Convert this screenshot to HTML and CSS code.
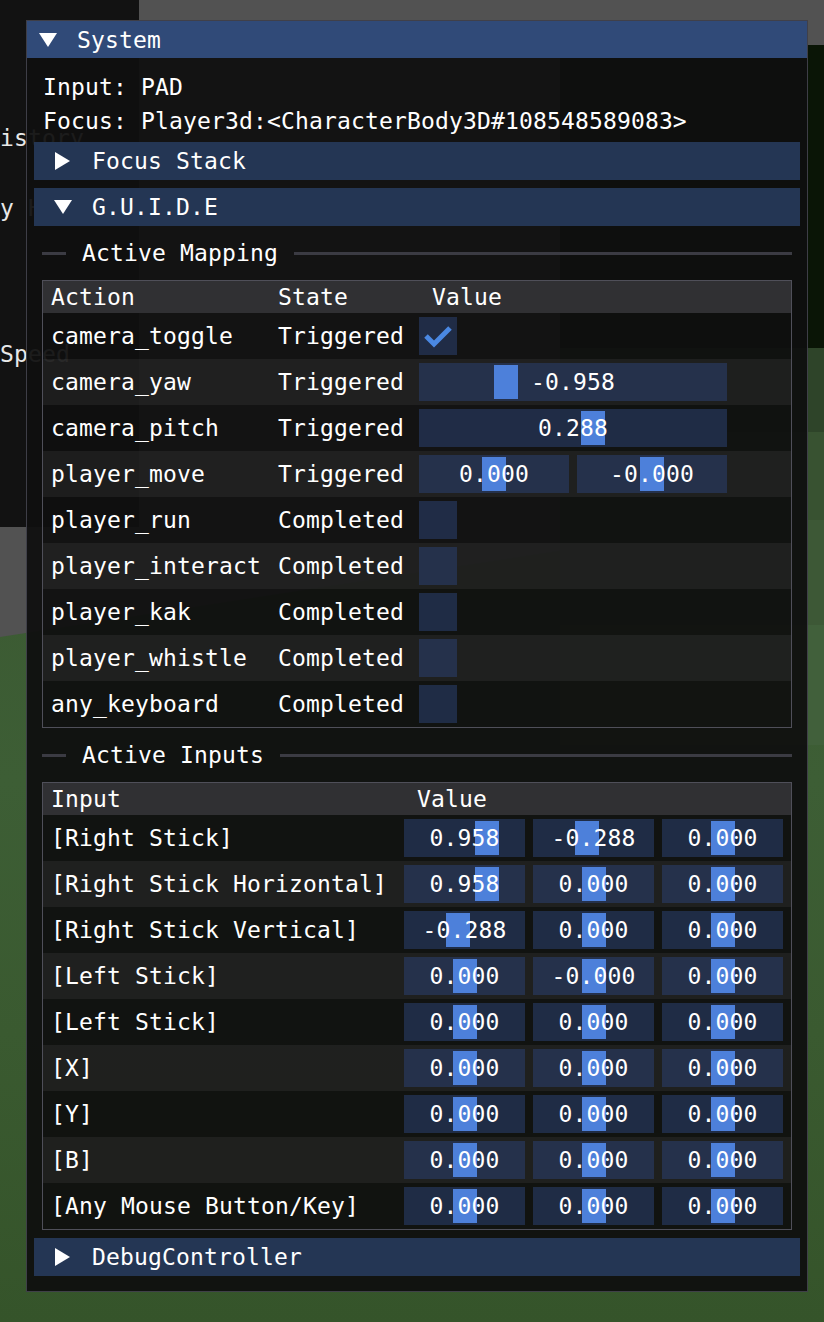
FILE: index.html
```html
<!DOCTYPE html>
<html>
<head>
<meta charset="utf-8">
<link rel="stylesheet" href="styles.css">
</head>
<body>
<div class="scene">
  <div class="ground"></div>
  <div class="sky"></div>
  <div class="trees"></div>
  <div class="band b1"></div>
  <div class="band b2"></div>
  <div class="band b3"></div>
  <div class="band b4"></div>
  <div class="left-panel">
    <div class="bgtext t1">istory</div>
    <div class="bgtext t2">y History</div>
    <div class="bgtext t3">Speed</div>
  </div>
</div>

<div class="window">
  <div class="titlebar">
    <svg class="arrow-down" width="18" height="14" viewBox="0 0 18 14"><polygon points="0,0 18,0 9,14" fill="#fff"/></svg>
    <span class="title">System</span>
  </div>
  <div class="content">
    <div class="text-line">Input: PAD</div>
    <div class="text-line">Focus: Player3d:&lt;CharacterBody3D#108548589083&gt;</div>

    <div class="header">
      <svg class="arrow" width="18" height="18" viewBox="0 0 18 18"><polygon points="1,0 16,9 1,18" fill="#fff"/></svg>
      <span class="label">Focus Stack</span>
    </div>
    <div class="header">
      <svg class="arrow" width="18" height="18" viewBox="0 0 18 18"><polygon points="0,2 18,2 9,16" fill="#fff"/></svg>
      <span class="label">G.U.I.D.E</span>
    </div>

    <div class="sep">
      <span class="sep-line short"></span>
      <span class="sep-label">Active Mapping</span>
      <span class="sep-line grow"></span>
    </div>

    <div class="table map">
      <div class="thead">
        <div class="cell">Action</div>
        <div class="cell">State</div>
        <div class="cell hval">Value</div>
      </div>
      <div class="tbody">
        <div class="trow">
          <div class="cell">camera_toggle</div>
          <div class="cell">Triggered</div>
          <div class="cell"><div class="box"><svg width="38" height="38" viewBox="0 0 38 38"><polyline points="7,19 15,27 31,11" fill="none" stroke="#4a88e2" stroke-width="5"/></svg></div></div>
        </div>
        <div class="trow">
          <div class="cell">camera_yaw</div>
          <div class="cell">Triggered</div>
          <div class="cell"><div class="slider w308"><div class="grab" style="--p:0.2605"></div><div class="val">-0.958</div></div></div>
        </div>
        <div class="trow">
          <div class="cell">camera_pitch</div>
          <div class="cell">Triggered</div>
          <div class="cell"><div class="slider w308"><div class="grab" style="--p:0.572"></div><div class="val">0.288</div></div></div>
        </div>
        <div class="trow">
          <div class="cell">player_move</div>
          <div class="cell">Triggered</div>
          <div class="cell"><div class="pair">
            <div class="slider w150"><div class="grab" style="--p:0.5"></div><div class="val">0.000</div></div>
            <div class="slider w150"><div class="grab" style="--p:0.5"></div><div class="val">-0.000</div></div>
          </div></div>
        </div>
        <div class="trow">
          <div class="cell">player_run</div>
          <div class="cell">Completed</div>
          <div class="cell"><div class="box"></div></div>
        </div>
        <div class="trow">
          <div class="cell">player_interact</div>
          <div class="cell">Completed</div>
          <div class="cell"><div class="box"></div></div>
        </div>
        <div class="trow">
          <div class="cell">player_kak</div>
          <div class="cell">Completed</div>
          <div class="cell"><div class="box"></div></div>
        </div>
        <div class="trow">
          <div class="cell">player_whistle</div>
          <div class="cell">Completed</div>
          <div class="cell"><div class="box"></div></div>
        </div>
        <div class="trow">
          <div class="cell">any_keyboard</div>
          <div class="cell">Completed</div>
          <div class="cell"><div class="box"></div></div>
        </div>
      </div>
    </div>

    <div class="sep">
      <span class="sep-line short"></span>
      <span class="sep-label">Active Inputs</span>
      <span class="sep-line grow"></span>
    </div>

    <div class="table inputs">
      <div class="thead">
        <div class="cell">Input</div>
        <div class="cell hval">Value</div>
      </div>
      <div class="tbody">
        <div class="trow">
          <div class="cell">[Right Stick]</div>
          <div class="cell"><div class="triple">
            <div class="slider"><div class="grab" style="--p:0.7395"></div><div class="val">0.958</div></div>
            <div class="slider"><div class="grab" style="--p:0.428"></div><div class="val">-0.288</div></div>
            <div class="slider"><div class="grab" style="--p:0.5"></div><div class="val">0.000</div></div>
          </div></div>
        </div>
        <div class="trow">
          <div class="cell">[Right Stick Horizontal]</div>
          <div class="cell"><div class="triple">
            <div class="slider"><div class="grab" style="--p:0.7395"></div><div class="val">0.958</div></div>
            <div class="slider"><div class="grab" style="--p:0.5"></div><div class="val">0.000</div></div>
            <div class="slider"><div class="grab" style="--p:0.5"></div><div class="val">0.000</div></div>
          </div></div>
        </div>
        <div class="trow">
          <div class="cell">[Right Stick Vertical]</div>
          <div class="cell"><div class="triple">
            <div class="slider"><div class="grab" style="--p:0.428"></div><div class="val">-0.288</div></div>
            <div class="slider"><div class="grab" style="--p:0.5"></div><div class="val">0.000</div></div>
            <div class="slider"><div class="grab" style="--p:0.5"></div><div class="val">0.000</div></div>
          </div></div>
        </div>
        <div class="trow">
          <div class="cell">[Left Stick]</div>
          <div class="cell"><div class="triple">
            <div class="slider"><div class="grab" style="--p:0.5"></div><div class="val">0.000</div></div>
            <div class="slider"><div class="grab" style="--p:0.5"></div><div class="val">-0.000</div></div>
            <div class="slider"><div class="grab" style="--p:0.5"></div><div class="val">0.000</div></div>
          </div></div>
        </div>
        <div class="trow">
          <div class="cell">[Left Stick]</div>
          <div class="cell"><div class="triple">
            <div class="slider"><div class="grab" style="--p:0.5"></div><div class="val">0.000</div></div>
            <div class="slider"><div class="grab" style="--p:0.5"></div><div class="val">0.000</div></div>
            <div class="slider"><div class="grab" style="--p:0.5"></div><div class="val">0.000</div></div>
          </div></div>
        </div>
        <div class="trow">
          <div class="cell">[X]</div>
          <div class="cell"><div class="triple">
            <div class="slider"><div class="grab" style="--p:0.5"></div><div class="val">0.000</div></div>
            <div class="slider"><div class="grab" style="--p:0.5"></div><div class="val">0.000</div></div>
            <div class="slider"><div class="grab" style="--p:0.5"></div><div class="val">0.000</div></div>
          </div></div>
        </div>
        <div class="trow">
          <div class="cell">[Y]</div>
          <div class="cell"><div class="triple">
            <div class="slider"><div class="grab" style="--p:0.5"></div><div class="val">0.000</div></div>
            <div class="slider"><div class="grab" style="--p:0.5"></div><div class="val">0.000</div></div>
            <div class="slider"><div class="grab" style="--p:0.5"></div><div class="val">0.000</div></div>
          </div></div>
        </div>
        <div class="trow">
          <div class="cell">[B]</div>
          <div class="cell"><div class="triple">
            <div class="slider"><div class="grab" style="--p:0.5"></div><div class="val">0.000</div></div>
            <div class="slider"><div class="grab" style="--p:0.5"></div><div class="val">0.000</div></div>
            <div class="slider"><div class="grab" style="--p:0.5"></div><div class="val">0.000</div></div>
          </div></div>
        </div>
        <div class="trow">
          <div class="cell">[Any Mouse Button/Key]</div>
          <div class="cell"><div class="triple">
            <div class="slider"><div class="grab" style="--p:0.5"></div><div class="val">0.000</div></div>
            <div class="slider"><div class="grab" style="--p:0.5"></div><div class="val">0.000</div></div>
            <div class="slider"><div class="grab" style="--p:0.5"></div><div class="val">0.000</div></div>
          </div></div>
        </div>
      </div>
    </div>

    <div class="header">
      <svg class="arrow" width="18" height="18" viewBox="0 0 18 18"><polygon points="1,0 16,9 1,18" fill="#fff"/></svg>
      <span class="label">DebugController</span>
    </div>
  </div>
</div>
</body>
</html>
```

FILE: styles.css
```css
* { box-sizing: border-box; }
html, body { margin: 0; padding: 0; }
body {
  width: 824px;
  height: 1322px;
  overflow: hidden;
  position: relative;
  background: #36552b;
  font-family: "DejaVu Sans Mono", "Liberation Mono", monospace;
  font-size: 23px;
  letter-spacing: 0.15px;
  color: #fff;
}

/* background game scene */
.scene { position: absolute; inset: 0; }
.scene .ground {
  position: absolute; left: 0; top: 600px; width: 824px; height: 722px;
  background: linear-gradient(to bottom, #3c5b33 0%, #3d5e35 25%, #3a5a30 60%, #35542a 100%);
}
.scene .sky {
  position: absolute; left: 0; top: 0; width: 824px; height: 640px;
  background: #525252;
  clip-path: polygon(0 0, 100% 0, 100% 510px, 0 637px);
}
.scene .trees { position: absolute; left: 560px; top: 45px; width: 264px; height: 303px; background: #0a1506; }
.scene .band { position: absolute; left: 560px; width: 264px; }
.scene .b1 { top: 348px; height: 84px; background: #2e4429; }
.scene .b2 { top: 432px; height: 88px; background: #385231; }
.scene .b3 { top: 520px; height: 105px; background: #3d5836; }
.scene .b4 { top: 625px; height: 120px; background: #41603b; }
.scene .left-panel {
  position: absolute; left: 0; top: 0; width: 139px; height: 527px;
  background: #121212;
}
.bgtext { position: absolute; left: 0; height: 26px; line-height: 26px; color: #e8e8e8; white-space: nowrap; }
.bgtext.t1 { top: 125px; }
.bgtext.t2 { top: 195px; }
.bgtext.t3 { top: 341px; }

/* window */
.window {
  position: absolute;
  left: 26px;
  top: 20px;
  width: 782px;
  background: rgba(15, 15, 15, 0.94);
  border: 1px solid rgba(110, 110, 128, 0.5);
}
.titlebar {
  height: 37px;
  background: #304a78;
  display: flex;
  align-items: center;
  padding-left: 12px;
}
.titlebar .title { margin-left: 20px; }

.content {
  padding: 16px 15px 15px;
  display: flex;
  flex-direction: column;
  gap: 8px;
}
.text-line { height: 26px; line-height: 26px; white-space: nowrap; padding-left: 1px; }

.header {
  margin: 0 -8px;
  height: 38px;
  background: #243654;
  display: flex;
  align-items: center;
  padding-left: 20px;
}
.header .label { margin-left: 20px; white-space: nowrap; }

.sep {
  height: 38px;
  display: flex;
  align-items: center;
  gap: 16px;
}
.sep-line { height: 3px; background: #3b3b43; }
.sep-line.short { width: 24px; }
.sep-line.grow { flex: 1; }
.sep-label { white-space: nowrap; }

/* tables */
.table { border: 1px solid #4f4f59; }
.thead {
  height: 32px;
  background: #303033;
  display: grid;
  align-items: center;
}
.trow {
  height: 46px;
  display: grid;
  align-items: center;
}
.tbody .trow:nth-child(even) { background: rgba(255, 255, 255, 0.06); }
.cell { padding: 0 8px; white-space: nowrap; }
.cell.hval { padding-left: 21px; }

.map .thead, .map .trow { grid-template-columns: 227px 141px 1fr; }
.inputs .thead, .inputs .trow { grid-template-columns: 353px 1fr; }

.box {
  width: 38px;
  height: 38px;
  background: rgba(42, 62, 105, 0.6);
}
.box svg { display: block; }

.slider {
  position: relative;
  height: 38px;
  background: rgba(42, 62, 105, 0.6);
}
.slider .grab {
  position: absolute;
  top: 2px;
  bottom: 2px;
  width: 24px;
  left: calc(2px + (100% - 28px) * var(--p));
  background: #4d80da;
}
.slider .val {
  position: relative;
  text-align: center;
  line-height: 38px;
  height: 38px;
}
.w308 { width: 308px; }
.w150 { width: 150px; }
.pair { display: flex; gap: 8px; }
.triple { display: flex; gap: 8px; }
.triple .slider { flex: 1; }
```
